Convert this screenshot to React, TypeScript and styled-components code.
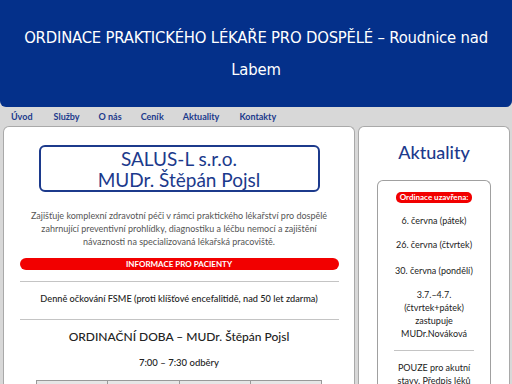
import styled, { createGlobalStyle } from "styled-components";

const GlobalStyle = createGlobalStyle`
  html, body {
    margin: 0;
    padding: 0;
    background: #d8d8d8;
    font-family: Lato, "Noto Sans", sans-serif;
  }
`;

const Page = styled.div`
  width: 512px;
  height: 384px;
  overflow: hidden;
  display: flex;
  flex-direction: column;
`;

const Header = styled.header`
  height: 107px;
  background: #04308a;
  border-radius: 0 0 6px 6px;
  display: flex;
  align-items: center;
  justify-content: center;
  box-sizing: border-box;
  padding: 0 10px;
`;

const Title = styled.h1`
  margin: 0;
  color: #fff;
  font-family: "Liberation Sans Narrow", "DejaVu Sans Condensed", Lato, sans-serif;
  font-size: 16.5px;
  font-weight: 400;
  letter-spacing: -0.2px;
  line-height: 32px;
  text-align: center;
  white-space: nowrap;
`;

const Nav = styled.nav`
  height: 19px;
  display: flex;
  align-items: center;
  padding-left: 11px;
`;

const NavLink = styled.a<{ $gap: number }>`
  color: #1c3a8c;
  font-size: 9px;
  font-weight: 700;
  text-decoration: none;
  margin-right: ${(p) => p.$gap}px;
`;

const Columns = styled.div`
  flex: 1;
  display: flex;
  gap: 3px;
  padding: 0 2px 0 3px;
  min-height: 0;
`;

const Panel = styled.section<{ $width: number }>`
  width: ${(p) => p.$width}px;
  background: #fff;
  border: 1px solid #a9a9a9;
  border-bottom: none;
  border-radius: 6px 6px 0 0;
  box-sizing: border-box;
  display: flex;
  flex-direction: column;
  align-items: center;
`;

const NameBox = styled.div`
  margin-top: 18px;
  width: 281px;
  height: 47px;
  box-sizing: border-box;
  border: 2px solid #1c3a8c;
  border-radius: 6px;
  color: #1c3a8c;
  font-size: 19px;
  line-height: 21px;
  text-align: center;
  padding-top: 1px;
`;

const Intro = styled.p`
  margin: 17px 0 0;
  width: 310px;
  color: #555;
  font-size: 9px;
  line-height: 13px;
  text-align: center;
`;

const RedBar = styled.div`
  margin-top: 10px;
  width: 319px;
  height: 12px;
  background: #f20000;
  border-radius: 6px;
  color: #fff;
  font-size: 8px;
  font-weight: 700;
  line-height: 12px;
  text-align: center;
`;

const Rule = styled.hr<{ $width: number; $top: number }>`
  margin: ${(p) => p.$top}px 0 0;
  width: ${(p) => p.$width}px;
  border: none;
  border-top: 1px solid #c4c4c4;
`;

const Line = styled.p<{ $size: number; $top: number }>`
  margin: ${(p) => p.$top}px 0 0;
  color: #222;
  font-size: ${(p) => p.$size}px;
  font-weight: 500;
  line-height: 1.3;
  text-align: center;
`;

const Hours = styled.table`
  margin-top: 11px;
  width: 286px;
  table-layout: fixed;
  border-collapse: collapse;
  font-size: 8px;

  td {
    border: 1px solid #999;
    height: 14px;
    background: #e6e6e6;
    color: #333;
    text-align: center;
  }
`;

const Heading = styled.h2`
  margin: 14px 0 0;
  color: #1c3a8c;
  font-size: 18px;
  font-weight: 500;
  line-height: 22px;
`;

const NewsBox = styled.div`
  margin-top: 17px;
  width: 114px;
  flex: 1;
  border: 1px solid #a0a0a0;
  border-bottom: none;
  border-radius: 6px 6px 0 0;
  display: flex;
  flex-direction: column;
  align-items: center;
  box-sizing: border-box;
`;

const Pill = styled.div`
  margin-top: 11px;
  background: #f20000;
  color: #fff;
  border-radius: 5px;
  font-size: 8px;
  font-weight: 700;
  line-height: 11px;
  padding: 0 4px;
`;

const NewsText = styled.p<{ $top: number }>`
  margin: ${(p) => p.$top}px 0 0;
  color: #222;
  font-size: 9px;
  line-height: 13px;
  text-align: center;
`;

const links = [
  { label: "Úvod", gap: 21 },
  { label: "Služby", gap: 19 },
  { label: "O nás", gap: 19 },
  { label: "Ceník", gap: 19 },
  { label: "Aktuality", gap: 20 },
  { label: "Kontakty", gap: 0 },
];

export default function App() {
  return (
    <>
      <GlobalStyle />
      <Page>
        <Header>
          <Title>
            ORDINACE PRAKTICKÉHO LÉKAŘE PRO DOSPĚLÉ – Roudnice nad
            <br />
            Labem
          </Title>
        </Header>
        <Nav>
          {links.map((l) => (
            <NavLink key={l.label} href="#" $gap={l.gap}>
              {l.label}
            </NavLink>
          ))}
        </Nav>
        <Columns>
          <Panel $width={352}>
            <NameBox>
              SALUS-L s.r.o.
              <br />
              MUDr. Štěpán Pojsl
            </NameBox>
            <Intro>
              Zajišťuje komplexní zdravotní péči v rámci praktického lékařství pro dospělé zahrnující
              preventivní prohlídky, diagnostiku a léčbu nemocí a zajištění návaznosti na
              specializovaná lékařská pracoviště.
            </Intro>
            <RedBar>INFORMACE PRO PACIENTY</RedBar>
            <Rule $width={319} $top={11} />
            <Line $size={9.2} $top={11}>
              Denně očkování FSME (proti klíšťové encefalitidě, nad 50 let zdarma)
            </Line>
            <Rule $width={319} $top={14} />
            <Line $size={12} $top={9}>
              ORDINAČNÍ DOBA – MUDr. Štěpán Pojsl
            </Line>
            <Line $size={9.5} $top={12}>
              7:00 – 7:30 odběry
            </Line>
            <Hours>
              <tbody>
                <tr>
                  <td />
                  <td />
                  <td />
                  <td>10:00-12:00</td>
                </tr>
              </tbody>
            </Hours>
          </Panel>
          <Panel $width={152}>
            <Heading>Aktuality</Heading>
            <NewsBox>
              <Pill>Ordinace uzavřena:</Pill>
              <NewsText $top={11}>6. června (pátek)</NewsText>
              <NewsText $top={11}>26. června (čtvrtek)</NewsText>
              <NewsText $top={13}>30. června (pondělí)</NewsText>
              <NewsText $top={11}>
                3.7.–4.7.
                <br />
                (čtvrtek+pátek)
                <br />
                zastupuje
                <br />
                MUDr.Nováková
              </NewsText>
              <Rule $width={80} $top={10} />
              <NewsText $top={10}>
                POUZE pro akutní
                <br />
                stavy. Předpis léků
              </NewsText>
            </NewsBox>
          </Panel>
        </Columns>
      </Page>
    </>
  );
}
